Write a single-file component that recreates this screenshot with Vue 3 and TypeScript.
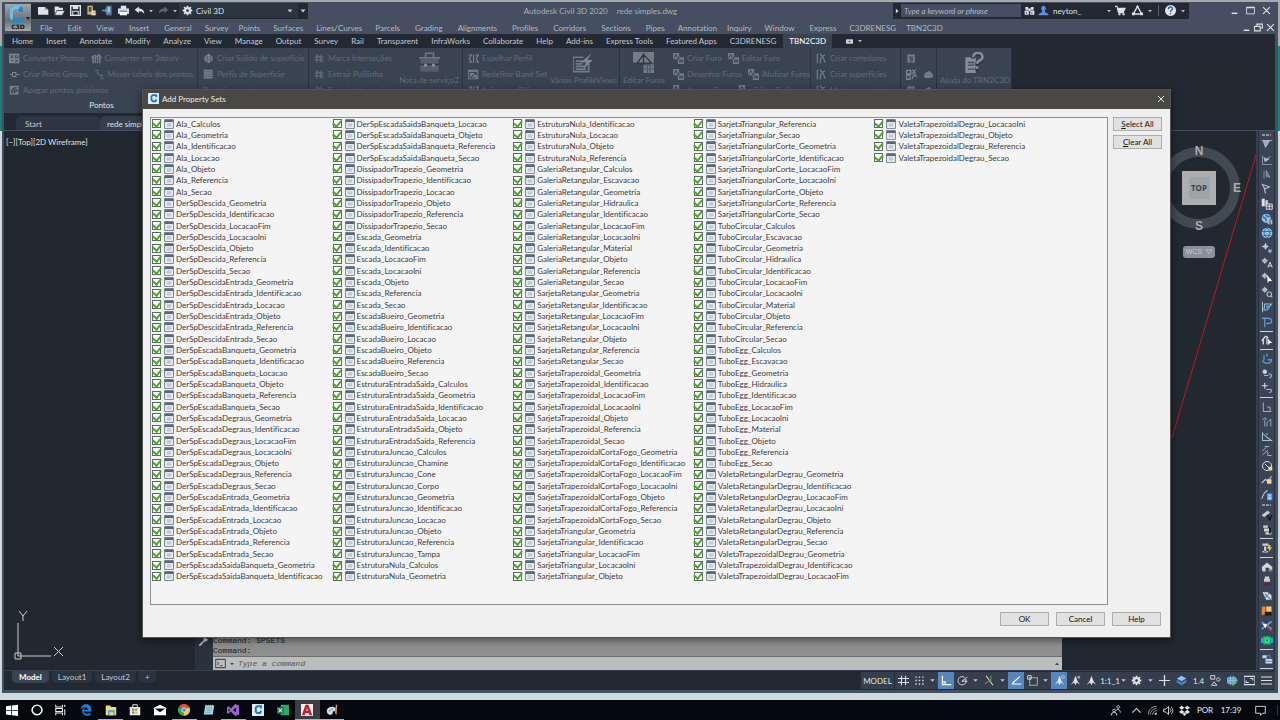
<script setup lang="ts">
import { h, ref, type FunctionalComponent } from 'vue'

type Shape = [d: string, fill?: string, stroke?: string, width?: number]

const W = '#dfe3e8'
const G = '#7d8693'
const D = '#727b88'
const B = '#5b9bd5'
const L = '#8fc1ea'

const icons: Record<string, Shape[]> = {
  new: [['M0 3h10l5 4v7H0z', W], ['M10 3l5 4h-5z', '#8d95a1']],
  open: [['M1 2h5l2 2h5v4H5l-4 7z', W], ['M4 8h12l-4 7H1z', W, '#222933', 1]],
  save: [['M1 1h14v14H1z', 'none', W, 2], ['M4 1h8v5H4z', W], ['M4 9h8v6H4z', 'none', W, 1.5]],
  saveas: [['M2 1h8v13H2z', '#c9b27b'], ['M4 3h4v7H4z', '#5c4d33'], ['M8 8h6v7H8z', W], ['M9 12l3-3 3 3z', '#e5a23d']],
  phone: [['M6 1h8v14H6z', '#66788f'], ['M8 3h4v8H8z', L], ['M0 7h5V4l4 4-4 4V9H0z', B]],
  print: [['M4 1h8v5H4z', W], ['M0 5h16v8H0z', '#cdd9e6'], ['M3 10h10v5H3z', '#fff'], ['M3 9h10', 'none', '#3f78b5', 1.5]],
  undo: [['M1 7l6-5v3c5 0 8 3 8 8-2-3-4-4-8-4v3z', W]],
  redo: [['M15 7L9 2v3c-5 0-8 3-8 8 2-3 4-4 8-4v3z', '#5b6471']],
  gear: [['M8 1v14M1 8h14M3 3l10 10M13 3L3 13', 'none', W, 2.6], ['M8 3a5 5 0 1 0 .1 0zM8 6a2 2 0 1 1-.1 0z', W], ['M8 6a2 2 0 1 0 .1 0z', '#2c3440']],
  down: [['M3 5h10l-5 6z', '#c3c8d0']],
  right: [['M5 2l7 6-7 6z', W]],
  binoc: [['M2 3h4v4H2zM10 3h4v4h-4zM1 8h6v6H1zM9 8h6v6H9zM6 5h4v4H6z', W], ['M3 10h1v3H3zM11 10h1v3h-1z', '#222933']],
  user: [['M8 1a4 4 0 0 1 2 7v2l5 3v2H1v-2l5-3V8a4 4 0 0 1 2-7z', '#5b8fe8']],
  cart: [['M0 2h3l2 9h8', 'none', W, 1.7], ['M4 4h12l-3 6H5z', W], ['M5 12h3v3H5zM11 12h3v3h-3z', W]],
  tri: [['M8 2l6 11H2z', 'none', W, 2], ['M8 0l2 3H6zM0 11h4v4H0zM12 11h4v4h-4z', W]],
  help: [['M8 0a8 8 0 1 0 .1 0z', W], ['M5 6c0-4 6-4 6-1 0 2-3 2-3 5M8 11.500v2', 'none', '#2f62b0', 2]],
  min: [['M3 13h10', 'none', W, 2.500]],
  max: [['M1 2h14v12H1z', 'none', W, 1.5], ['M1 2h14v2H1z', W]],
  restore: [['M5 6V2h10v7h-4M1 6h10v8H1z', 'none', W, 1.8]],
  close: [['M2 2l12 12M14 2L2 14', 'none', W, 2]],
  pill: [['M0 3h16v10H0z', '#cdd2d8'], ['M5 9h6L8 6z', '#222933']],
  grid4: [['M0 1h15v14H0z', G], ['M2 3l4 5M6 3L2 8M9 4h4v3H9zM3 11h3M9 10l4 3M13 10l-4 3', 'none', '#39424f', 1.3]],
  poly: [['M0 6l5-4 3 2 4-3 4 5-2 2v7H2V8z', D], ['M5 5v10M8 6v9M11 5v10', 'none', '#3a4352', 1.2]],
  point: [['M1 8h4M11 8h4M5 5h5v6H5z', 'none', G, 1.500]],
  move: [['M1 2h5v5M4 5l8 7M9 14h5M12 7v5', 'none', '#5a6371', 2]],
  erase: [['M1 1h13v13H1z', D], ['M4 12c0-5 2-8 7-8M8 12V8h5', 'none', '#343c49', 2]],
  solid: [['M8 1l6 4v6l-6 4-6-4V5z', G], ['M2 6h12M2 10h12M6 2v12M11 2v12', 'none', '#4b5462', 1]],
  hatch: [['M1 1h13v13H1z', '#737c8a'], ['M1 4h13M1 8h13M1 11h13', 'none', '#515a68', 1]],
  cross: [['M4 2v12M10 2v12M1 6h13M1 10h13M6 3l7 10', 'none', '#68717e', 1.4]],
  toolbox: [['M5 4V1h6v3', 'none', '#6e7682', 1.200], ['M0 4h16v1H0z', '#838b96'], ['M1 5h14v4H1z', '#555e6b'], ['M1 10h14v5H1z', '#555e6b'], ['M1 9h14v1H1z', '#303845'], ['M4 9h2v2H4zM10 9h2v2h-2z', '#9098a2']],
  mirror: [['M1 3h4l-3 5 3 5H1M11 3h4l-3 5 3 5h-4M8 2v12', 'none', G, 1.5]],
  band: [['M0 1h15v14H0z', D], ['M2 5h11M2 5v8h9M4 12l8-6M9 6h4v4', 'none', '#353e4b', 1.4]],
  views: [['M0 4h8M0 4v11h12V9M2 7h6M2 9h5M2 11h8M2 13h8', 'none', D, 1.300], ['M14 1L6 8h4l-2 5 7-7h-4z', '#7f8792']],
  editf: [['M0 0h16v8H0zM8 9h8v7H8z', '#747c88'], ['M3 9l2-3 3-4 4 4 2 3M8 1v8M3 9h10', 'none', '#2c343f', 1], ['M8 10h8M8 13h8M11 9v7M13 9v7', 'none', '#4a5260', .7]],
  bore: [['M0 0h9v9H0zM7 6h9v10H7z', D], ['M1 8l3-6 3 6M10 9v5M13 9v5M9 12h6', 'none', '#353d49', 1.3]],
  corr: [['M2 1v14M5 2c6 0 6 7 8 12M6 15c1-5-1-8 7-12', 'none', D, 1.8]],
  sheet: [['M2 2h11v12H2z', D], ['M4 6h7M7 6v8M9 8v4M5 9h5', 'none', '#39424f', 1.3]],
  cloud: [['M1 10l3-5 5-2 4 3 2 4-3 3H3z', D]],
  scribble: [['M1 2h6v5H1zM9 1l5 6M14 1L9 7M1 9h5v6H1zM9 15c0-7 6-7 6-3M10 9h5', 'none', G, 1.7]],
  helpdoc: [['M1 4h8v12H1z', '#858d98'], ['M3 8h5M3 10h5M3 13h5', 'none', '#414a57', 1], ['M7 5c0-5 8-5 7 0 0 3-4 2-4 5M10 12v2', 'none', '#2c343f', 3], ['M7 4c0-5 8-4 7 0 0 3-4 2-4 5M10 11v2', 'none', '#858d98', 2]],
  prop: [['M1 1h14v14H1z', '#f8fafc', '#687786', 1.500], ['M1 1h14v4H1z', '#596879'], ['M4 8h8M4 11h8', 'none', '#91a1b1', 1.5]],
  clogo: [['M0 0h16v16H0z', '#d9edf8'], ['M12 6V3H7L5 5v5l2 2h4l1-3', 'none', '#1f7ab8', 2.600]],
  wrench: [['M2 14l7-7', 'none', '#c4c9d0', 2.200], ['M8 4l3-3 1 3 3 1-3 3H8z', '#c4c9d0']],
  prompt: [['M1 2h14v12H1z', 'none', '#4d4d4d', 1.5], ['M3 6l3 2-3 2M7 11h4', 'none', '#4d4d4d', 1.3]],
  dark: [['M3 5h10l-5 6z', '#444']],
  up: [['M4 10h8L8 5z', '#444']],
  // Side toolbar
  t1: [['M1 2h14M3 3l8 0-5 8z', '#8ba6c1', '#c5d0db', 1]],
  t2: [['M2 2v12h13', 'none', '#9aa8b7', 1], ['M3 4l8 3-6 4z', '#aab9c8'], ['M8 8l4-5', 'none', W, 1]],
  t3: [['M4 3v10M7 2l5 9-5-1z', '#5a7fa6', '#93a6ba', 1]],
  t4: [['M2 2l9 3-6 3zM4 6l2 8', 'none', '#b4bfcb', 1.500]],
  table: [['M1 1h4v10H1zM6 3h3v8H6z', W], ['M7 8h8v7H7zM7 11h8M11 8v7', '#414b5b', W, 1.200]],
  globe: [['M7 1a6 6 0 1 0 .1 0z', L], ['M2 5l4 2 1 4M6 2l3 3 4-1', 'none', '#2d6fa8', 2], ['M9 9h6v6H9z', '#cdd7e0'], ['M11 9v6M13 9v6', 'none', '#445', 1]],
  globe2: [['M8 1a7 7 0 1 0 .1 0z', L], ['M2 6h12M3 11h10M8 1c-6 5-4 10 0 14M8 1c6 5 4 10 0 14', 'none', '#276da8', 1.3]],
  pt1: [['M6 1v9M1 6h9M4 4h4v4H4z', 'none', W, 1], ['M10 10h4v4h-4z', L]],
  pt2: [['M5 1v8M1 5h8M3 3h4v4H3z', 'none', W, 1], ['M9 14l3-7 3 7M10 12h4', 'none', W, 1.2]],
  pt3: [['M5 1v8M1 5h8M3 3h4v4H3z', 'none', W, 1], ['M8 4l7 8h-4l-2 3z', '#fff']],
  pt4: [['M5 1v8M1 5h8M3 3h4v4H3z', 'none', W, 1], ['M11 8a3 3 0 1 0 .1 0zM13 13l2 2', 'none', '#b2bcc8', 1.5]],
  seg: [['M2 1v14', 'none', W, 1], ['M5 4h9l-6 8H4z', 'none', L, 1.500], ['M7 6h4v4H7z', B]],
  path: [['M1 3h8c7 0 7 7 0 7H7M5 3v12', 'none', B, 1.7]],
  pick: [['M1 9l5-6 4 2M3 14V7M8 14V5', 'none', W, 1.7], ['M9 6l6 6-3 0-2 3z', '#fff']],
  loop: [['M4 3v7M8 1v4M2 10c3 6 12 4 12-1H9', 'none', B, 1.700]],
  loop2: [['M5 2a3 3 0 1 0 .1 0z', '#c9d0d7'], ['M4 10h6M10 8c5-1 5 5 1 5', 'none', L, 1.500]],
  loop3: [['M5 1v8M1 5h8', 'none', W, 1.3], ['M7 10h4c4-2 4 4 0 4', 'none', L, 1.4]],
  corner: [['M3 2v12h11M8 8h4v6', 'none', '#a6b3c2', 1.300]],
  bars: [['M2 5l4-3 1 3M5 5v9M8 14V9l5-5v10', 'none', '#8ba9c6', 1.300]],
  graph: [['M2 3v11h13M3 5l5 5 5 3M8 4v3', 'none', '#a9bdd1', 1.4]],
  dash: [['M2 8l5-5M5 2l6 0M2 13l7-6M9 9v5h5', 'none', '#9fb3c7', 1.3]],
  orbit: [['M8 2a6 6 0 1 0 .1 0zM5 5l6 6', 'none', '#dadfe5', 1.300], ['M10 9h5v5h-5z', '#f1d69c']],
  spark: [['M1 12l5-5 3 3 5-7', 'none', '#c1cad3', 1.500], ['M8 7h6v6H8z', '#f1d69c']],
  curve: [['M1 13c2-6 5-10 8-11', 'none', '#c1cad3', 1.4], ['M8 6h7v9H8z', '#4aa6ef'], ['M10 8h3M10 11h3M10 13h3', 'none', '#fff', 1]],
  pipe: [['M1 8l8-6 3 3-8 6z', '#c4cbc9'], ['M8 8h7v3h-7zM10 8h3v7h-3z', '#0d1015']],
  pipe2: [['M3 2h6v3H3zM4 6h7v4H4zM6 11h8v3H6z', '#d5d4ca'], ['M11 5h2v8h-2zM5 10h9', '#11151a']],
  bolt: [['M2 2h8v3H2zM4 6h3v7H4zM2 12h7v2H2z', '#cdd1d3'], ['M10 4l-2 5h3l-1 5 5-7h-3l1-3z', '#f3bd36']],
  house: [['M1 8l7-6 7 6v5h-4V9H6v5H2z', '#d4d7da'], ['M10 11h5v3h-5z', '#7e8790']],
  manhole: [['M5 2h6v3H5zM4 5h8v4H4z', '#cacfcb'], ['M3 11h10v3H3z', '#5b2430']],
  cloudb: [['M2 3h7l5 4v6H7z', '#d8e1ea'], ['M5 5l8 8M5 11l6-7', 'none', '#5780b2', 1.5]],
  orange: [['M1 2h5v11H1z', '#e28a39'], ['M7 2h7v8H7z', '#f5c667'], ['M5 9h9v5H5z', '#271a16']],
  cut: [['M1 3l13 9M1 12L14 2', 'none', '#5ba4e4', 2.500], ['M2 5l6 1-2 5z', '#fff'], ['M8 8l6 6', 'none', '#cf4747', 2]],
  valve: [['M0 5h4v7H0zM12 5h4v7h-4z', '#2d9bef'], ['M3 3h10v11H3z', '#14b964'], ['M5 5h6v7H5z', '#3be08a'], ['M7 7h2v3H7z', '#082']],
  layers2: [['M2 3h6v4H2zM6 8h9v6H6z', '#cad8e5'], ['M6 11h9M8 8V3h4v5', 'none', '#4c86c0', 1.500]],
  // Status bar
  hash: [['M5 1v14M11 1v14M0 5h16M0 11h16', 'none', W, 1.5]],
  dots: [['M2 2h2v2H2zM7 2h2v2H7zM12 2h2v2h-2zM2 7h2v2H2zM7 7h2v2H7zM12 7h2v2h-2zM2 12h2v2H2zM7 12h2v2H7zM12 12h2v2h-2z', W]],
  ortho: [['M2 1v13h13M2 10h4v4', 'none', '#fff', 1.700]],
  polar: [['M11 3.500a6 6 0 1 0 2 7M7 9l8-6M7 9h8M13 6v5', 'none', W, 1.3]],
  iso: [['M3 1l10 14', 'none', W, 1.5], ['M10 1v8', 'none', '#53ac61', 1.5], ['M1 13l7-5', 'none', '#d05353', 1.5]],
  angle: [['M1 13h14M2 12L13 2', 'none', '#fff', 1.600]],
  osnap: [['M4 4h11v11H4z', 'none', '#b8a592', 1.500], ['M1 1h5v5H1z', 'none', W, 1.4]],
  anno: [['M8 1l3 8 4 5-5-3-2 4-2-4-5 3 4-5z', W], ['M13 1a2 2 0 1 0 .1 0z', 'none', W, 1]],
  anno2: [['M8 1l3 8 4 5-5-3-2 4-2-4-5 3 4-5z', W], ['M13 1v5M10 3h5', 'none', W, 1]],
  anno3: [['M8 1l3 8 4 5-5-3-2 4-2-4-5 3 4-5z', W]],
  plus: [['M8 0v16M0 8h16', 'none', W, 1.800]],
  layers: [['M8 1l7 4-7 4-7-4z', L], ['M1 7l7 4 7-4v4l-7 4-7-4z', '#3f86c6']],
  shapes: [['M1 1h6v5H1zM12 4a2.500 2.500 0 1 0 .1 0zM6 10l4 5H2z', 'none', W, 1.300]],
  map: [['M1 4h12v8H1zM5 1v14M9 1v14M1 8h12', B, L, 1.3], ['M6 11l3 3 6-7', 'none', '#64bd63', 2.500]],
  full: [['M0 2h16v12H0z', 'none', W, 1.500], ['M9 5h4v3M7 11H3V8', 'none', W, 1.500]],
  menu: [['M0 3h16M0 8h16M0 13h16', 'none', W, 1.6]],
  // Taskbar
  win: [['M0 3l7-1v6H0zM8 2l8-1v7H8zM0 9h7v6l-7-1zM8 9h8v7l-8-1z', '#fff']],
  circle: [['M8 1.500a6.500 6.500 0 1 0 .1 0z', 'none', '#fff', 2]],
  task: [['M1 1v3h9V1M1 15v-3h9v3M1 6h9v4H1zM13 1v3M13 7v8', 'none', '#eee', 1.400]],
  edge: [['M1 8C1-2 15-2 15 7v3H5c0 3 5 4 9 2v3C8 17 2 14 3 8c1-2 3-3 5-3-2 1-3 2-3 3h6c0-5-8-5-10 0z', '#1684dc']],
  folder: [['M1 2h6l1 2h7v11H1z', '#f7d774'], ['M4 8h9v7H4z', '#53aee5'], ['M6 11h5v4H6z', '#f7d774']],
  store: [['M1 4h14v11H1z', '#eee'], ['M5 4V1h6v3', 'none', '#eee', 1.300], ['M4 6h3v3H4z', '#e65b35'], ['M8 6h3v3H8z', '#6fb441'], ['M4 10h3v3H4z', '#348fd5'], ['M8 10h3v3H8z', '#f0b82e']],
  mail: [['M0 5l8-4 8 4v10H0z', '#fff'], ['M1 6h14l-7 5z', '#05090f']],
  chrome: [['M8 8L1 4a8 8 0 0 1 14 0z', '#e44d3d'], ['M8 8l7-4a8 8 0 0 1-7 12z', '#f5c834'], ['M8 8v8A8 8 0 0 1 1 4z', '#38a852'], ['M8 5a3 3 0 1 0 .1 0z', '#4285f4', '#fff', 1]],
  notes: [['M3 2h12l-2 12H1z', '#a9d7df'], ['M4 5h8M4 8h8M3 11h8', 'none', '#5b9bad', 1], ['M4 1v2M7 1v2M10 1v2M13 1v2', 'none', '#eee', 1]],
  vs: [['M11 0l5 2v12l-5 2-6-6-3 3-2-1V4l2-1 3 3zM12 5L8 8l4 3zM2 6v4l2-2z', '#9b62d0']],
  excel: [['M5 1h11v14H5z', '#2ca669'], ['M0 4h9v9H0z', '#107c41'], ['M2 6l5 5M7 6l-5 5', 'none', '#fff', 1.400]],
  acad: [['M0 0h16v16H0z', '#eee'], ['M6 1h4l5 14h-4l-1-3H6l-1 3H1zM7 9h2L8 5z', '#bd2733']],
  paint: [['M1 10c-1-7 13-9 12-2-1 3-4 0-4 4-1 4-7 3-8-2z', '#c7e3f2'], ['M4 8h2v2H4z', '#dc5341'], ['M7 6h2v2H7z', '#399ad8'], ['M13 1l2 0-1 14-2-3z', '#e5953a']],
  people: [['M6 6a2 2 0 1 0 .1 0zM2 15c0-6 8-6 8 0M12 1a2 2 0 1 0 .1 0zM9 8c2-3 6-1 6 3', 'none', W, 1.400]],
  caret: [['M2 11l6-6 6 6', 'none', W, 1.500]],
  wifi: [['M2 14C2 7 7 2 14 2M5 14c0-5 4-9 9-9M8 14c0-3 3-6 6-6', 'none', '#aaa', 1.3], ['M11 14c0-2 1-3 3-3v3z', W]],
  speaker: [['M1 6h3l4-4v12l-4-4H1zM10 5c2 2 2 4 0 6M12 3c3 3 3 7 0 10', 'none', W, 1.300]],
  dropbox: [['M4 1l4 3-4 3-4-3zM12 1l4 3-4 3-4-3zM4 7l4 3-4 3-4-3zM12 7l4 3-4 3-4-3zM8 11l3 2-3 3-3-3z', W]],
  notif: [['M1 2h14v10h-4l-3 3v-3H1z', 'none', W, 1.300]],
}

const Icon: FunctionalComponent<{ name: string }> = (p) =>
  h('svg', { class: 'ico', viewBox: '0 0 16 16', 'aria-hidden': 'true' },
    (icons[p.name] ?? []).map(([d, fill = 'none', stroke = 'none', w = 1]) =>
      h('path', { d, fill, stroke, 'stroke-width': w, 'fill-rule': 'evenodd' })))
Icon.props = ['name']

const menus: [string, string?][] = [
  ['File'], ['Edit'], ['View'], ['Insert'], ['General'], ['Survey', 'near'], ['Points', 'close'],
  ['Surfaces', 'near'], ['Lines/Curves', 'near'], ['Parcels', 'near'], ['Grading'], ['Alignments'],
  ['Profiles'], ['Corridors'], ['Sections'], ['Pipes'], ['Annotation', 'near'], ['Inquiry', 'close'],
  ['Window', 'near'], ['Express'], ['C3DRENESG', 'near'], ['TBN2C3D', 'close'],
]
const tabs = ['Home', 'Insert', 'Annotate', 'Modify', 'Analyze', 'View', 'Manage', 'Output', 'Survey', 'Rail',
  'Transparent', 'InfraWorks', 'Collaborate', 'Help', 'Add-ins', 'Express Tools', 'Featured Apps', 'C3DRENESG', 'TBN2C3D']

interface Panel { cls: string; lead?: [string, string]; rows: [string, string][][]; tail?: [string, string]; title?: string }
const panels: Panel[] = [
  { cls: 'p-pontos', title: 'Pontos', rows: [
    [['grid4', 'Converter Pontos'], ['poly', 'Converter em 3dpoly']],
    [['point', 'Criar Point Groups'], ['move', 'Mover labels dos pontos']],
    [['erase', 'Apagar pontos próximos']]] },
  { cls: 'p-sup', rows: [[['solid', 'Criar Sólido de superfície']], [['hatch', 'Perfis de Superfície']], [['', 'Breakline no layer']]] },
  { cls: 'p-int', rows: [[['cross', 'Marca Interseções']], [['cross', 'Extrair Polilinha']], [['cross', 'Extrair Interseções']]], tail: ['toolbox', 'Nota de serviço2'] },
  { cls: 'p-perfil', rows: [[['mirror', 'Espelhar Perfil']], [['band', 'Redefinir Band Set']], [['mirror', 'Adicionar Offset']]], tail: ['views', 'Vários ProfileViews'] },
  { cls: 'p-furos', lead: ['editf', 'Editar Furos'], rows: [
    [['bore', 'Criar Furo'], ['bore', 'Editar Furo']],
    [['bore', 'Desenhar Furos'], ['bore', 'Atulizar Furos']],
    [['bore', 'Apagar Furos'], ['bore', 'Editar Estilo']]] },
  { cls: 'p-corr', rows: [[['corr', 'Criar corredores']], [['corr', 'Criar superfícies']], [['corr', 'Mudar assembly']]] },
  { cls: 'p-misc', rows: [[['sheet', '']], [['scribble', ''], ['cloud', '']], [['sheet', ''], ['cloud', '']]] },
  { cls: 'p-ajuda', rows: [], tail: ['helpdoc', 'Ajuda do TBN2C3D'] },
]

const G6 = 'Geometria Identificacao Locacao Objeto Referencia Secao'
const G7 = 'Geometria Identificacao LocacaoFim LocacaoIni Objeto Referencia Secao'
const TUBE = 'Calculos Escavacao Geometria Hidraulica Identificacao LocacaoFim LocacaoIni Material Objeto Referencia Secao'
const families: [string, string][] = [
  ['Ala', 'Calculos ' + G6],
  ['DerSpDescida', G7],
  ['DerSpDescidaEntrada', G6],
  ['DerSpEscadaBanqueta', G6],
  ['DerSpEscadaDegraus', G7],
  ['DerSpEscadaEntrada', G6],
  ['DerSpEscadaSaidaBanqueta', G6],
  ['DissipadorTrapezio', G6],
  ['Escada', G7],
  ['EscadaBueiro', G6],
  ['EstruturaEntradaSaida', 'Calculos Geometria Identificacao Locacao Objeto Referencia'],
  ['EstruturaJuncao', 'Calculos Chamine Cone Corpo Geometria Identificacao Locacao Objeto Referencia Tampa'],
  ['EstruturaNula', 'Calculos Geometria Identificacao Locacao Objeto Referencia'],
  ['GaleriaRetangular', TUBE],
  ['SarjetaRetangular', G7],
  ['SarjetaTrapezoidal', G7],
  ['SarjetaTrapezoidalCortaFogo', G7],
  ['SarjetaTriangular', G7],
  ['SarjetaTriangularCorte', G7],
  ['TuboCircular', TUBE],
  ['TuboEgg', TUBE],
  ['ValetaRetangularDegrau', G7],
  ['ValetaTrapezoidalDegrau', G7],
]
const sets = ref(families.flatMap(([base, parts]) =>
  parts.split(' ').map((part) => ({ name: `${base}_${part}`, on: true }))))
const setAll = (on: boolean) => sets.value.forEach((s) => { s.on = on })

const side = ('grip t1 t2 t3 t4 table globe globe2 pt1 pt2 pt3 pt4 seg path - pick - loop loop2 loop3 - corner bars graph dash orbit spark curve ' +
  'grip pipe pipe2 - bolt - house manhole cloudb orange cut valve - layers2 -').split(' ')

const status: [string, string?][] = [
  ['hash'], ['dots'], ['down', 'arr'], ['ortho', 'lit'], ['polar'], ['down', 'arr'], ['iso'], ['down', 'arr'],
  ['angle', 'lit'], ['osnap'], ['down', 'arr'], ['anno', 'lit'], ['anno2'], ['anno3'],
]
const statusEnd: [string, string?][] = [['gear'], ['down', 'arr'], ['plus'], ['layers'], ['1.4', 'text'], ['shapes'], ['map'], ['full'], ['menu']]

const apps: [string, string, string?][] = [
  ['win', 'Start'], ['circle', 'Search'], ['task', 'Task View'], ['edge', 'Edge'], ['folder', 'Explorer', 'open'], ['store', 'Store'],
  ['mail', 'Mail'], ['chrome', 'Chrome', 'open'], ['notes', 'Notepad'], ['vs', 'Visual Studio', 'open'], ['clogo', 'Civil 3D'],
  ['excel', 'Excel'], ['acad', 'AutoCAD', 'open current'], ['paint', 'Paint', 'open'],
]
</script>

<template>
  <div class="desktop">
    <div class="app">
      <header class="head">
        <button class="logo" aria-label="Application menu">
          <svg viewBox="0 0 26 19">
            <path d="M18 7V3l-3-2H9L5 4v9l4 5h6l3-2v-4l-3 1-1 2h-4l-2-3V6l2-2h3l1 3z" fill="#2389ca" />
            <path d="M9 1L5 4v9l2 3 1-4V6l2-2h4l1-3z" fill="#6cc0ec" />
            <path d="M21 12h4l-2 3z" fill="#222" />
          </svg>
          <b>C3D</b>
        </button>
        <div class="bars">
          <div class="title">
            <div class="qat">
              <button v-for="n in ['new', 'open', 'save', 'saveas', 'phone', 'print', 'undo']" :key="n" class="ib" :aria-label="n"><Icon :name="n" /></button>
              <button class="ib tiny" aria-label="Undo list"><Icon name="down" /></button>
              <button class="ib" aria-label="redo"><Icon name="redo" /></button>
              <button class="ib tiny" aria-label="Redo list"><Icon name="down" /></button>
              <button class="workspace"><Icon name="gear" /><span>Civil 3D</span><Icon name="down" /></button>
              <button class="ib small" aria-label="Customize"><Icon name="down" /></button>
            </div>
            <h1 class="caption"><span>Autodesk Civil 3D 2020</span><span>rede simples.dwg</span></h1>
            <div class="info">
              <button class="ib tiny" aria-label="Expand"><Icon name="right" /></button>
              <input type="text" placeholder="Type a keyword or phrase" aria-label="Search">
              <button class="ib" aria-label="Find"><Icon name="binoc" /></button>
              <button class="user"><Icon name="user" /><span>neyton_</span><Icon name="down" /></button>
              <button class="ib" aria-label="Store"><Icon name="cart" /></button>
              <button class="ib" aria-label="Apps"><Icon name="tri" /></button>
              <button class="ib tiny" aria-label="Apps list"><Icon name="down" /></button>
              <i class="bar" />
              <button class="ib" aria-label="Help"><Icon name="help" /></button>
              <button class="ib tiny" aria-label="Help list"><Icon name="down" /></button>
            </div>
            <div class="winbtns">
              <button v-for="n in ['min', 'max', 'close']" :key="n" :aria-label="n"><Icon :name="n" /></button>
            </div>
          </div>
          <nav class="menus">
            <button v-for="[m, c] in menus" :key="m" :class="c">{{ m }}</button>
            <div class="docbtns">
              <button v-for="n in ['min', 'restore', 'close']" :key="n" :aria-label="n"><Icon :name="n" /></button>
            </div>
          </nav>
        </div>
      </header>

      <nav class="tabs">
        <button v-for="t in tabs" :key="t" :class="{ active: t === 'TBN2C3D' }">{{ t }}</button>
        <button class="pill" aria-label="Minimize ribbon"><Icon name="pill" /><Icon name="down" class="sm" /></button>
      </nav>

      <div class="ribbon">
        <section v-for="p in panels" :key="p.cls" class="panel" :class="p.cls">
          <div class="tools">
            <button v-if="p.lead" class="big"><Icon :name="p.lead[0]" /><span>{{ p.lead[1] }}</span></button>
            <div v-if="p.rows.length" class="rows">
              <div v-for="(r, i) in p.rows" :key="i" class="row">
                <button v-for="([ic, t], j) in r" :key="j" :aria-label="t || ic"><Icon v-if="ic" :name="ic" /><span v-if="t">{{ t }}</span></button>
              </div>
            </div>
            <button v-if="p.tail" class="big"><Icon :name="p.tail[0]" /><span>{{ p.tail[1] }}</span></button>
          </div>
          <h2 v-if="p.title">{{ p.title }}</h2>
        </section>
      </div>

      <div class="files">
        <button>Start</button>
        <button class="on">rede simples*</button>
      </div>

      <main class="work">
        <div class="canvas">
          <div class="vp">[−][Top][2D Wireframe]</div>
          <svg class="cube" viewBox="0 0 95 320">
            <circle cx="37" cy="57" r="36" fill="none" stroke="#414952" stroke-width="10" />
            <path d="M94 24L10 307" stroke="#c4161c" fill="none" />
            <rect x="20" y="40" width="34" height="34" fill="#acaeb0" />
            <rect x="27" y="46" width="21" height="22" fill="#9da4aa" />
            <text x="37" y="60" class="top">TOP</text>
            <text x="37" y="24" class="dir">N</text>
            <text x="75" y="61" class="dir">E</text>
            <text x="37" y="99" class="dir">S</text>
            <rect x="21" y="115" width="32" height="12" rx="3" fill="#8b8f9c" />
            <text x="32" y="123" class="wcs">WCS</text>
            <path d="M44 119h6l-3 4z" fill="none" stroke="#b5b8c2" />
          </svg>
          <svg class="ucs" viewBox="0 0 60 60"><path d="M7 13v33h33M4 43h6v6H4zM8 1l4 5 4-5M12 6v5M43 37l9 9M52 37l-9 9" fill="none" stroke="#c8ccd0" /></svg>
          <div class="cmd">
            <div class="handle"><Icon name="wrench" /></div>
            <div class="console">
              <div class="hist"><p>Command: SPSETS</p><p>Command:</p></div>
              <div class="line"><Icon name="prompt" /><Icon name="dark" class="sm" /><input type="text" placeholder="Type a command" aria-label="Command line"><Icon name="up" /></div>
            </div>
          </div>
        </div>
        <aside class="side">
          <template v-for="(s, i) in side" :key="i">
            <i v-if="s === '-'" class="sep" />
            <i v-else-if="s === 'grip'" class="grip" />
            <button v-else :aria-label="s"><Icon :name="s" /></button>
          </template>
        </aside>
      </main>

      <footer class="foot">
        <div class="layouts">
          <button class="on">Model</button><button>Layout1</button><button>Layout2</button><button>+</button>
        </div>
        <div class="status">
          <button class="model">MODEL</button>
          <button v-for="([n, c], i) in status" :key="i" :class="c" :aria-label="n"><Icon :name="n" /></button>
          <button class="scale">1:1_1<Icon name="down" class="sm" /></button>
          <button v-for="([n, c], i) in statusEnd" :key="'e' + i" class="wide" :class="c" :aria-label="n"><template v-if="c === 'text'">{{ n }}</template><Icon v-else :name="n" /></button>
        </div>
      </footer>
    </div>

    <div class="taskbar">
      <div class="apps"><button v-for="[n, t, c] in apps" :key="n" :class="c" :aria-label="t"><Icon :name="n" /></button></div>
      <div class="tray">
        <button class="people" aria-label="People"><Icon name="people" /></button>
        <button v-for="n in ['caret', 'wifi', 'speaker', 'dropbox']" :key="n" :aria-label="n"><Icon :name="n" /></button>
        <span>POR</span><time>17:39</time>
        <button class="notif" aria-label="Notifications"><Icon name="notif" /></button>
      </div>
    </div>

    <div class="dialog" role="dialog" aria-labelledby="dlg-title">
      <div class="dtitle"><Icon name="clogo" /><h2 id="dlg-title">Add Property Sets</h2><button aria-label="Close"><Icon name="close" /></button></div>
      <div class="dbody">
        <div class="list">
          <label v-for="s in sets" :key="s.name"><input v-model="s.on" type="checkbox"><Icon name="prop" /><span>{{ s.name }}</span></label>
        </div>
        <div class="sidebtns">
          <button class="btn" @click="setAll(true)"><u>S</u>elect All</button>
          <button class="btn" @click="setAll(false)"><u>C</u>lear All</button>
        </div>
      </div>
      <div class="dfoot"><button class="btn">OK</button><button class="btn">Cancel</button><button class="btn">Help</button></div>
    </div>
  </div>
</template>

<style>
body { margin: 0; background: #000; }
</style>

<style scoped>
* { box-sizing: border-box; }
.desktop {
  position: relative; display: flex; flex-direction: column; height: 100vh; min-height: 600px; overflow: hidden;
  font: 8px/10px Lato, "Open Sans", sans-serif; font-variant-ligatures: none; color: #c3c8d0;
  background: linear-gradient(#a5abad 0 46px, #17807a 46px 131px, #cfdadd 131px);
}
button, input { font: inherit; font-variant-ligatures: none; color: inherit; background: none; border: 0; padding: 0; margin: 0; border-radius: 0; }
button { display: flex; align-items: center; justify-content: center; white-space: nowrap; }
h1, h2, p { margin: 0; font: inherit; font-variant-ligatures: none; }
.ico { width: 11px; height: 11px; flex: none; display: block; }
.ico.sm { width: 6px; height: 6px; }

.app { flex: 1; min-height: 0; margin: 2px 2px 7px; padding: 0 3px 3px 2px; background: #454f61; display: flex; flex-direction: column; }
.head { display: flex; height: 32px; flex: none; }
.logo { width: 26px; height: 27px; margin: 2px 0 0 1px; flex: none; flex-direction: column; background: linear-gradient(#a2a7ad, #6b7077 60%, #a2a6aa); color: #111; }
.logo svg { width: 26px; height: 19px; }
.logo b { font: bold 6px/6px "DejaVu Sans", sans-serif; }
.bars { flex: 1; min-width: 0; display: flex; flex-direction: column; }
.title { display: flex; height: 17px; align-items: center; position: relative; }
.qat { display: flex; align-items: center; height: 16px; width: 277px; background: #222933; padding-left: 4px; flex: none; }
.ib { width: 16px; height: 15px; }
.ib.tiny { width: 8px; }
.ib.tiny .ico { width: 6px; height: 6px; }
.ib.small { width: 10px; }
.qat .ib:last-child .ico, .workspace .ico:last-child { width: 8px; height: 8px; }
.workspace { flex: 1; height: 15px; gap: 3px; color: #dfe3e8; background: #2c3440; padding: 0 4px 0 3px; }
.workspace span { flex: 1; text-align: left; }
.caption { display: flex; gap: 9px; flex: 1; justify-content: center; color: #a9b0bc; }
.info { display: flex; align-items: center; height: 16px; width: 296px; background: #222933; color: #dfe3e8; flex: none; }
.info input { width: 120px; height: 13px; background: #454f61; padding: 0 3px; font-style: italic; }
.info input::placeholder { color: #b4bbc6; opacity: 1; }
.info .ib { width: 17px; }
.info .ib.tiny { width: 8px; }
.user { width: 74px; gap: 4px; }
.user span { flex: 1; text-align: left; }
.user .ico:last-child { width: 6px; height: 6px; }
.bar { width: 1px; height: 11px; margin: 0 3px 0 4px; background: #596270; }
.winbtns { display: flex; width: 86px; justify-content: flex-end; padding-right: 4px; gap: 7px; flex: none; }
.winbtns .ico, .docbtns .ico { width: 9px; height: 9px; }
.menus { display: flex; height: 15px; align-items: center; padding-left: 9px; padding-top: 2px; color: #b2b9c4; }
.menus > button { margin-left: 15px; }
.menus > .near { margin-left: 13px; }
.menus > .close { margin-left: 10px; }
.menus > button:first-child { margin-left: 0; }
.docbtns { display: flex; margin-left: auto; gap: 3px; }

.tabs { display: flex; height: 14px; flex: none; background: #222933; padding-left: 8px; gap: 13px; color: #c3c8d0; }
.tabs .active { background: #3a4352; padding: 0 6px; margin-left: -6px; color: #fff; }
.pill { gap: 3px; }
.pill .ico:first-child { width: 9px; height: 7px; }

.ribbon { display: flex; height: 65px; flex: none; background: #222933; color: #626b79; overflow: hidden; }
.panel { background: #3a4352; border-right: 1px solid #2b333f; padding-top: 2px; display: flex; flex-direction: column; flex: none; overflow: hidden; }
.tools { display: flex; height: 50px; justify-content: space-between; }
.row { display: flex; height: 16px; gap: 6px; padding-left: 5px; }
.row button { gap: 3px; }
.panel h2 { text-align: center; color: #dfe3e8; padding-left: 2px; }
.big { flex-direction: column; justify-content: flex-start; gap: 2px; padding: 2px 3px 0; }
.big .ico { width: 21px; height: 21px; }
.p-pontos { width: 194px; }
.p-sup { width: 111px; }
.p-int { width: 154px; }
.p-perfil { width: 157px; }
.p-furos { width: 191px; }
.p-furos .tools { justify-content: flex-start; }
.p-corr { width: 90px; }
.p-misc { width: 36px; }
.p-ajuda { width: 75px; }

.files { display: flex; height: 18px; flex: none; background: #222933; padding: 3px 0 0 12px; border-bottom: 1px solid #454f61; }
.files button { width: 84px; background: #2d3542; border-radius: 5px 5px 0 0; justify-content: flex-start; padding-left: 9px; padding-top: 2px; }
.files .on { background: #353e4c; color: #dfe3e8; padding-left: 7px; }

.work { flex: 1; min-height: 0; display: flex; }
.canvas { flex: 1; position: relative; background: #212830; border-right: 2px solid #363f4d; }
.vp { padding: 6px 2px; color: #dfe3e8; }
.cube { position: absolute; right: -1px; top: 0; width: 95px; height: 320px; }
.cube text { text-anchor: middle; }
.cube .dir { font: bold 12px "Liberation Sans", sans-serif; fill: #a9adb1; }
.cube .top { font: bold 8px "Open Sans", sans-serif; fill: #3a4149; }
.cube .wcs { font: 7px "Liberation Sans", sans-serif; fill: #c9ccd4; }
.ucs { position: absolute; left: 7px; bottom: 0; width: 60px; height: 60px; }
.cmd { position: absolute; left: 191px; right: 194px; bottom: 0; height: 48px; display: flex; color: #222; font: 8px/10px "Liberation Mono", monospace; }
.handle { width: 18px; background: #2a323e; padding: 14px 3px; }
.console { flex: 1; display: flex; flex-direction: column; }
.hist { flex: 1; background: #8e8f90; display: flex; flex-direction: column; justify-content: flex-end; border-bottom: 1px solid #6c6e71; }
.line { height: 13px; display: flex; align-items: center; gap: 3px; padding: 0 1px 0 2px; background: #bcbdbe; }
.line input { flex: 1; font-style: italic; }
.line input::placeholder { color: #555; opacity: 1; }
.line .ico:last-child { width: 8px; height: 8px; }

.side { width: 17px; flex: none; display: flex; flex-direction: column; background: #3a4454; border: solid #27303c; border-width: 0 1px; padding-top: 2px; }
.side button { flex: 15 1 0; min-height: 0; }
.side .ico { width: 12px; height: 12px; }
.sep { flex: 4 1 0; display: flex; align-items: center; padding: 0 1px; }
.sep::before { content: ""; height: 1px; flex: 1; background: #cdd2d8; }
.grip { flex: 5 1 0; margin: 0 3px; background: repeating-linear-gradient(90deg, #8b94a1 0 3px, transparent 3px 4px) center / 100% 2px no-repeat; }

.foot { display: flex; height: 20px; flex: none; justify-content: space-between; background: #222933; border-top: 1px solid #363f4d; }
.layouts { display: flex; height: 12px; padding-left: 8px; gap: 3px; }
.layouts button { background: #2b3340; padding: 0 6px; border-radius: 0 0 5px 5px; }
.layouts .on { background: #3a4352; color: #fff; font-weight: bold; padding: 0 7px; }
.status { display: flex; padding: 1px 0; }
.status button { width: 16px; background: #353e4c; color: #dfe3e8; }
.status .ico { width: 11px; height: 11px; }
.status .arr { width: 11px; }
.status .arr .ico { width: 7px; height: 7px; }
.status .lit { background: #5586bd; }
.status .model { width: 34px; border-right: 1px solid #222933; }
.status .scale { width: 29px; }
.status .scale .ico { width: 7px; height: 7px; }
.status .wide { width: 17px; }
.status .wide.arr { width: 11px; }

.taskbar { height: 20px; flex: none; display: flex; justify-content: space-between; background: #05080e; color: #eee; }
.apps { display: flex; width: 344px; }
.apps button { flex: 1; }
.apps .ico { width: 12px; height: 12px; }
.apps .open { box-shadow: inset 0 -1px #a9b1ba; }
.apps .current { background: #3b3f45; }
.tray { display: flex; align-items: center; padding-right: 2px; }
.tray button { width: 16px; }
.tray .people { width: 26px; }
.tray span, .tray time { width: 26px; text-align: center; }
.tray .notif { width: 34px; border-right: 1px solid #333; }

.dialog { position: absolute; inset: 89px 109px 82px 142px; display: flex; flex-direction: column; background: #f0f0f0; color: #2b2b2b; border: 1px solid #55534f; box-shadow: 0 2px 8px rgba(0, 0, 0, .5); }
.dtitle { height: 19px; flex: none; display: flex; align-items: center; gap: 3px; padding: 0 5px 2px; background: #4a4845; color: #eee; }
.dtitle h2 { flex: 1; }
.dtitle button .ico { width: 8px; height: 8px; }
.dbody { flex: 1; min-height: 0; display: flex; gap: 5px; padding: 8px 8px 0 7px; }
.list { flex: 1; display: grid; grid-template: repeat(41, 1fr) / repeat(5, 1fr); grid-auto-flow: column; padding: 0 52px 22px 1px; background: #f4f4f4; border: 1px solid #8b8f96; }
.list label { display: flex; align-items: center; min-height: 0; height: 100%; line-height: 10px; gap: 2px; color: #404040; white-space: nowrap; }
.list input { appearance: none; width: 9px; height: 9px; margin-right: 1px; border: 1px solid #5c6a64; background: #fff; display: grid; place-items: center; }
.list input:checked::after { content: ""; width: 4px; height: 6px; margin-top: -2px; border: solid #4fa52f; border-width: 0 2px 2px 0; transform: rotate(40deg); }
.list .ico { width: 10px; height: 10px; }
.sidebtns { display: flex; flex-direction: column; gap: 4px; }
.btn { width: 49px; height: 14px; background: #e1e1e1; border: 1px solid #adadad; color: #111; }
.dfoot { display: flex; flex: none; gap: 7px; justify-content: flex-end; padding: 7px 9px 11px; }
</style>
